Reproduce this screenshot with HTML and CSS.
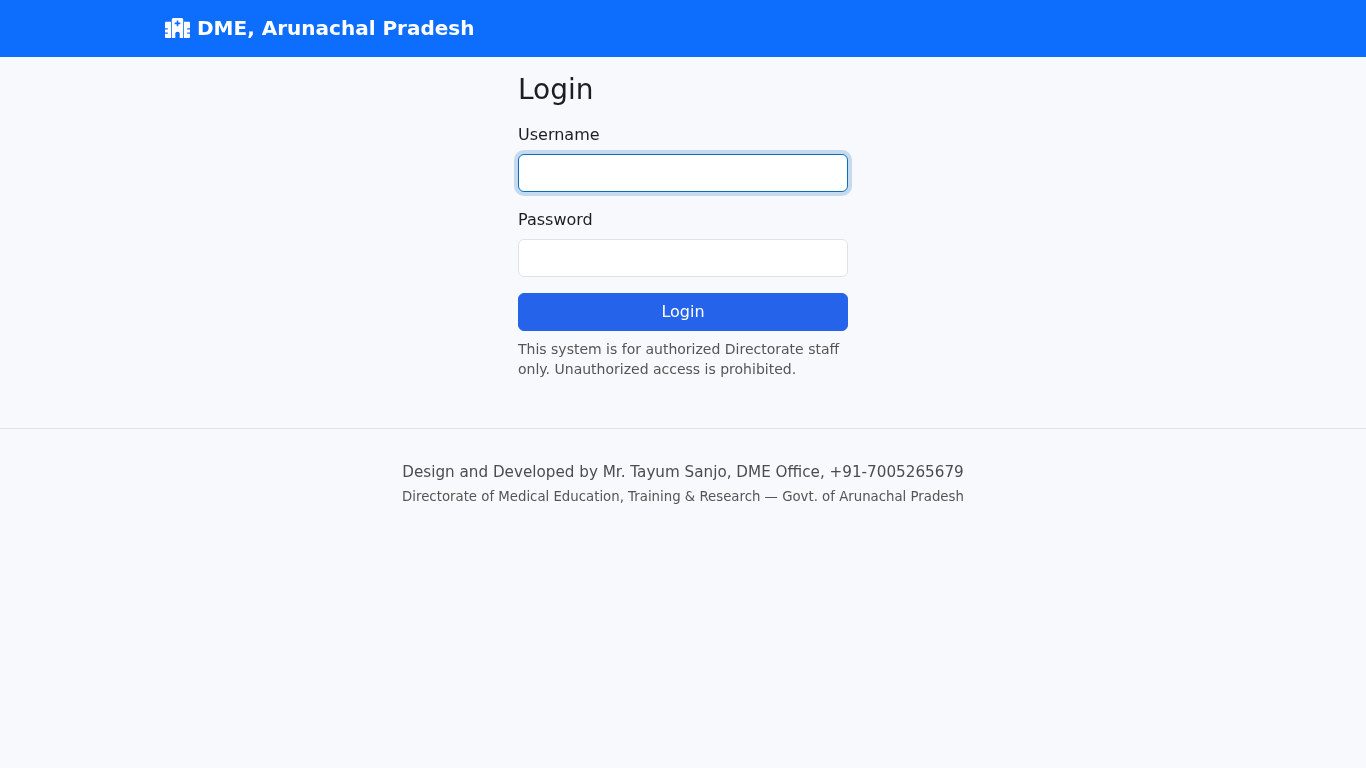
FILE: index.html
```html
<!DOCTYPE html>
<html lang="en">
<head>
  <meta charset="UTF-8" />
  <meta name="viewport" content="width=device-width, initial-scale=1.0" />
  <title>Login - DME, Arunachal Pradesh</title>
  <link rel="stylesheet" href="styles.css">
</head>
<body>
  <nav class="navbar">
    <a class="brand" href="#">
      <svg class="brand-icon" viewBox="0 0 25 20" fill="currentColor" fill-rule="evenodd" aria-hidden="true">
        <path d="M6.800 20V1.500A1.500 1.500 0 0 1 8.300 0h8.400a1.500 1.500 0 0 1 1.500 1.500V20h-3.500v-5a2.500 2.500 0 0 0-4.400 0v5zM11.700 2.500v2h-2v1.800h2v2h1.600v-2h2V4.500h-2v-2z"/>
        <path d="M1 3.800h5V20H1a1 1 0 0 1-1-1v-3.300h2.800v-1.200H0v-3h2.800v-1.200H0V4.800a1 1 0 0 1 1-1z"/>
        <path d="M24 3.800h-5V20h5a1 1 0 0 0 1-1v-3.300h-2.800v-1.200H25v-3h-2.800v-1.200H25V4.800a1 1 0 0 0-1-1z"/>
      </svg>
      DME, Arunachal Pradesh
    </a>
  </nav>

  <main class="login">
    <h1 class="login-title">Login</h1>
    <form>
      <div class="field">
        <label for="username">Username</label>
        <input id="username" class="input input-focus" type="text" />
      </div>
      <div class="field">
        <label for="password">Password</label>
        <input id="password" class="input" type="password" />
      </div>
      <button class="submit" type="submit">Login</button>
    </form>
    <p class="notice">This system is for authorized Directorate staff only. Unauthorized access is prohibited.</p>
  </main>

  <footer class="footer">
    <div class="footer-credit">Design and Developed by Mr. Tayum Sanjo, DME Office, +91-7005265679</div>
    <div class="footer-org">Directorate of Medical Education, Training &amp; Research — Govt. of Arunachal Pradesh</div>
  </footer>
</body>
</html>
```

FILE: styles.css
```css
* { box-sizing: border-box; }
body {
  margin: 0;
  min-height: 768px;
  background: #f8f9fc;
  color: #1b1e22;
  font-family: "DejaVu Sans", sans-serif;
  font-size: 16px;
  line-height: 1.5;
}

/* Top bar */
.navbar {
  display: flex;
  align-items: center;
  height: 57px;
  padding: 0 165px 2px;
  background: #0d6efd;
}
.brand {
  display: flex;
  align-items: center;
  gap: 7px;
  color: #fff;
  font-size: 20px;
  font-weight: 700;
  text-decoration: none;
  will-change: transform;
}
.brand-icon { width: 25px; height: 20px; }

/* Login form */
.login {
  width: 330px;
  margin: 0 auto;
  padding-top: 16px;
  will-change: transform;
}
.login-title {
  margin: 0 0 16px;
  font-size: 28px;
  font-weight: 500;
  line-height: 1.2;
}
.field { margin-bottom: 16px; }
.field label {
  display: block;
  margin-bottom: 8px;
  line-height: 23px;
}
.input {
  display: block;
  width: 100%;
  height: 38px;
  padding: 6px 12px;
  background: #fff;
  border: 1px solid #dee2e6;
  border-radius: 6px;
  font: inherit;
  outline: none;
}
.input-focus, .input:focus {
  border-color: #0f6cbd;
  box-shadow: 0 0 0 4px rgba(15, 108, 189, 0.22);
}
.submit {
  display: block;
  width: 100%;
  height: 38px;
  padding: 6px 12px;
  background: #2563eb;
  border: 1px solid #2563eb;
  border-radius: 6px;
  color: #fff;
  font: inherit;
  cursor: pointer;
}
.notice {
  margin: 8px 0 0;
  color: #555;
  font-size: 14px;
  line-height: 20px;
}

/* Footer */
.footer {
  margin-top: 49px;
  padding-top: 32px;
  border-top: 1px solid #dee2e6;
  text-align: center;
  color: #4a4d50;
  font-size: 15.2px;
  will-change: transform;
}
.footer-org {
  margin-top: 3px;
  color: #555;
  font-size: 13.300px;
}
```
